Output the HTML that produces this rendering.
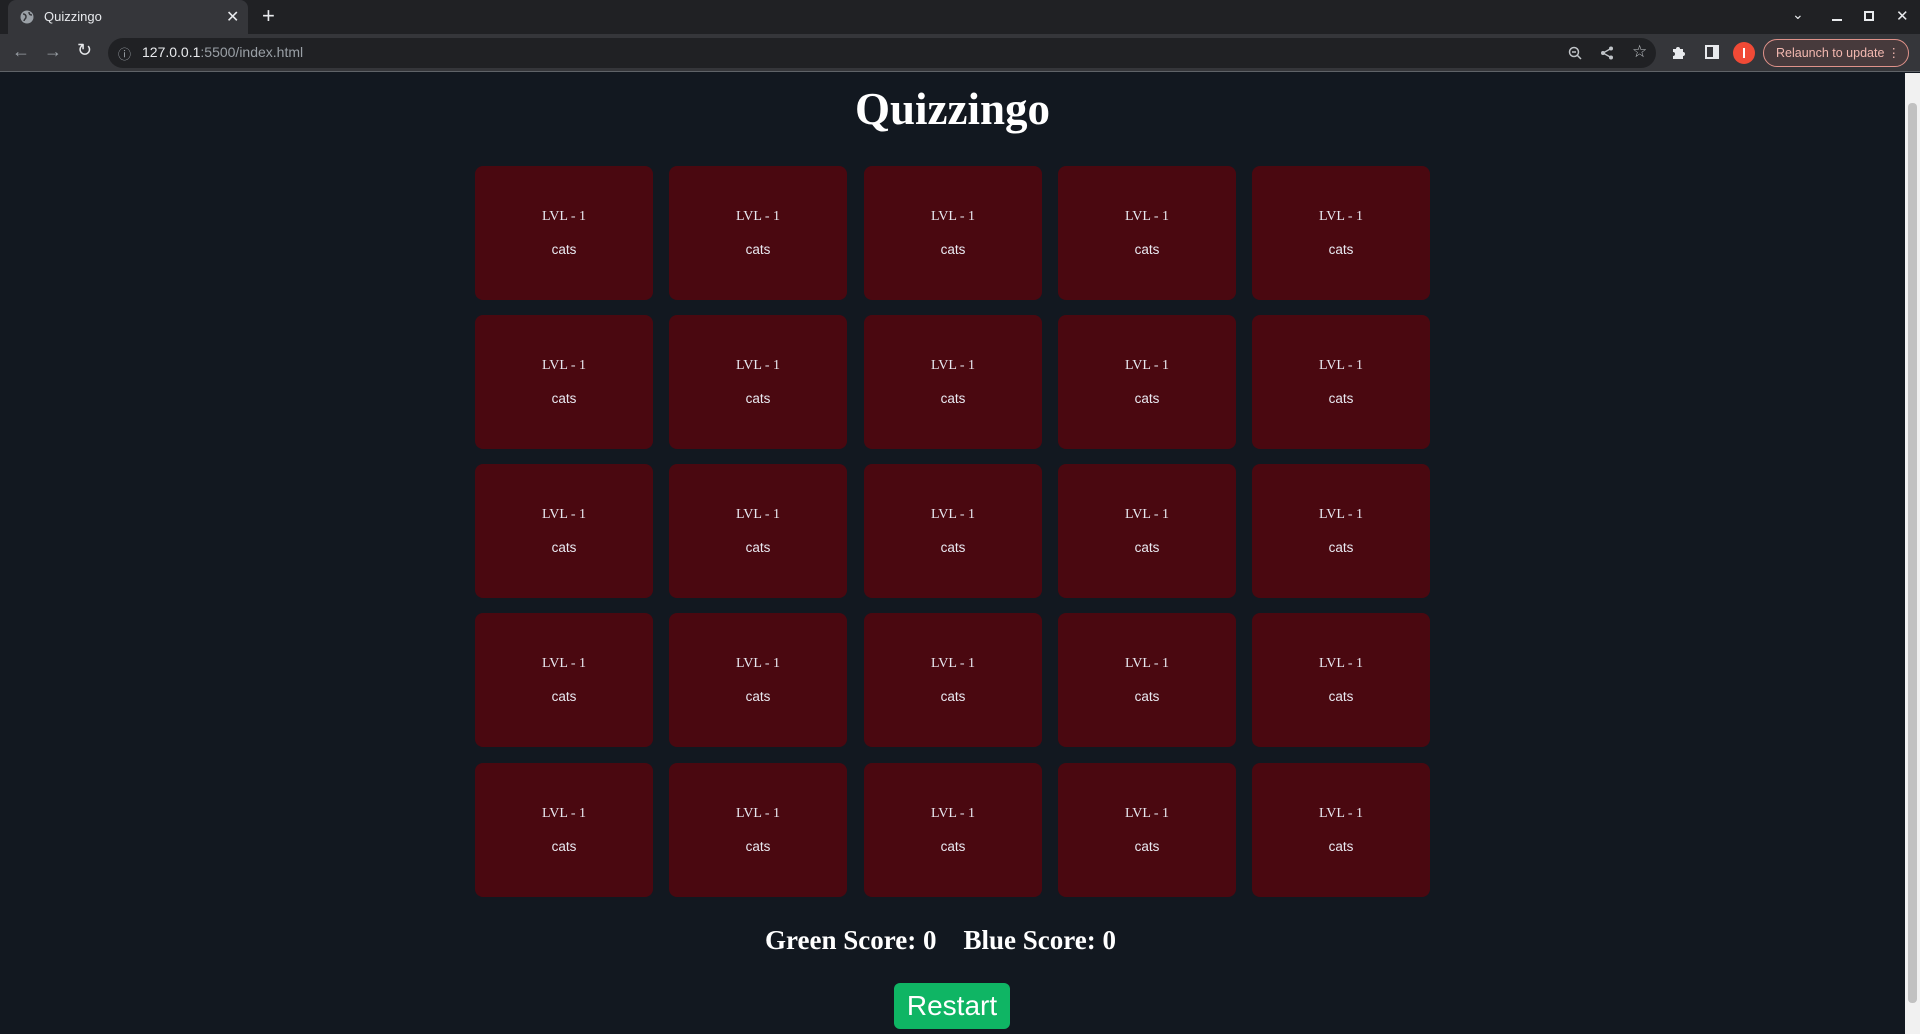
<!DOCTYPE html>
<html><head><meta charset="utf-8"><style>
*{margin:0;padding:0;box-sizing:border-box}
body{width:1920px;height:1034px;overflow:hidden;background:#121820;font-family:"Liberation Sans",sans-serif;position:relative}
.tabbar{position:absolute;left:0;top:0;width:1920px;height:34px;background:#202124}
.tab{position:absolute;left:8px;top:0;width:240px;height:34px;background:#35363a;border-radius:8px 8px 0 0;color:#e8eaed;font-size:13px}
.toolbar{position:absolute;left:0;top:34px;width:1920px;height:38px;background:#35363a;border-bottom:1px solid #5f6368}
.omni{position:absolute;left:108px;top:4px;width:1548px;height:30px;background:#202124;border-radius:15px;color:#9aa0a6;font-size:14px}
.scroll{position:absolute;right:0;top:73px;width:15px;height:961px;background:#f1f1f1}
.scroll .th{position:absolute;left:3px;top:30px;width:9px;height:900px;background:#c1c1c1;border-radius:4px}
h1{position:absolute;left:0;width:1905px;top:83px;text-align:center;font-family:"Liberation Serif",serif;font-weight:bold;font-size:45px;color:#fff}
.card{position:absolute;width:178px;height:134px;background:#4a0810;border-radius:8px;text-align:center;color:#e8e8f0}
.card .l{position:absolute;top:43px;left:0;width:100%;font-family:"Liberation Serif",serif;font-size:14px}
.card .c{position:absolute;top:76px;left:0;width:100%;font-size:13.5px}
.score{position:absolute;top:925px;left:-12px;width:1905px;text-align:center;font-family:"Liberation Serif",serif;font-weight:bold;font-size:27px;color:#fff}
.btn{position:absolute;left:894px;top:983px;width:116px;height:46px;background:#0fb564;border-radius:6px;color:#fff;font-size:28px;text-align:center;line-height:46px}
</style></head><body>
<div class="tabbar">
<div class="tab"><svg style="position:absolute;left:12px;top:10px" width="14" height="14" viewBox="0 0 14 14"><circle cx="7" cy="7" r="6.5" fill="#9aa0a6"/><path d="M3 4c2 0 3 1 3 3s-2 2-2 4M9 2c0 2 1 3 3 3" stroke="#35363a" stroke-width="1.5" fill="none"/></svg><span style="position:absolute;left:36px;top:9px">Quizzingo</span><span style="position:absolute;left:218px;top:7px;font-size:16px">✕</span></div>
<span style="position:absolute;left:262px;top:3px;color:#e8eaed;font-size:22px">+</span>
<span style="position:absolute;left:1792px;top:6px;color:#e8eaed;font-size:14px">⌄</span>
<div style="position:absolute;left:1832px;top:19px;width:10px;height:2px;background:#e8eaed"></div>
<div style="position:absolute;left:1864px;top:11px;width:10px;height:10px;border:2px solid #e8eaed"></div>
<span style="position:absolute;left:1896px;top:7px;color:#e8eaed;font-size:15px">✕</span>
</div>
<div class="toolbar">
<span style="position:absolute;left:12px;top:7px;color:#9aa0a6;font-size:18px">←</span>
<span style="position:absolute;left:44px;top:7px;color:#9aa0a6;font-size:18px">→</span>
<span style="position:absolute;left:77px;top:6px;color:#e8eaed;font-size:18px">↻</span>
<div class="omni"><span style="position:absolute;left:10px;top:6px;font-size:13px">ⓘ</span><span style="position:absolute;left:34px;top:6px"><span style="color:#e8eaed">127.0.0.1</span>:5500/index.html</span>
<svg style="position:absolute;left:1460px;top:8px" width="14" height="14" viewBox="0 0 14 14"><circle cx="6" cy="6" r="4.5" stroke="#c0c4c8" stroke-width="1.5" fill="none"/><path d="M9.5 9.5L13 13M4 6h4" stroke="#c0c4c8" stroke-width="1.5"/></svg>
<svg style="position:absolute;left:1492px;top:8px" width="14" height="14" viewBox="0 0 14 14"><circle cx="11" cy="2.5" r="2" fill="#c0c4c8"/><circle cx="3" cy="7" r="2" fill="#c0c4c8"/><circle cx="11" cy="11.5" r="2" fill="#c0c4c8"/><path d="M11 2.5L3 7l8 4.5" stroke="#c0c4c8" stroke-width="1.3" fill="none"/></svg>
<span style="position:absolute;left:1524px;top:4px;color:#c0c4c8;font-size:17px">☆</span></div>
<svg style="position:absolute;left:1671px;top:10px" width="16" height="16" viewBox="0 0 16 16"><path d="M2 5h3a2 2 0 1 1 4 0h3v3a2 2 0 1 1 0 4v3H2v-3a2 2 0 1 0 0-4z" fill="#e8eaed"/></svg>
<div style="position:absolute;left:1705px;top:11px;width:14px;height:14px;border:2px solid #e8eaed;border-right-width:6px"></div>
<div style="position:absolute;left:1733px;top:8px;width:22px;height:22px;border-radius:50%;background:#f04a36"><div style="position:absolute;left:10px;top:6px;width:2px;height:10px;background:#fff"></div></div>
<div style="position:absolute;left:1763px;top:5px;width:146px;height:28px;border:1px solid #e0928a;border-radius:14px;background:#473a3c;color:#f2b8b0;font-size:12.5px;line-height:26px;padding-left:12px">Relaunch to update <span style="position:absolute;right:8px;top:0">⋮</span></div>
</div>
<h1>Quizzingo</h1>
<div class="score">Green Score: 0&nbsp;&nbsp;&nbsp;&nbsp;Blue Score: 0</div>
<div class="btn">Restart</div>
<div class="scroll"><div class="th"></div></div>
<div style="position:absolute;left:0;top:0">
<div class="card" style="left:475px;top:166px"><div class="l">LVL - 1</div><div class="c">cats</div></div>
<div class="card" style="left:669px;top:166px"><div class="l">LVL - 1</div><div class="c">cats</div></div>
<div class="card" style="left:864px;top:166px"><div class="l">LVL - 1</div><div class="c">cats</div></div>
<div class="card" style="left:1058px;top:166px"><div class="l">LVL - 1</div><div class="c">cats</div></div>
<div class="card" style="left:1252px;top:166px"><div class="l">LVL - 1</div><div class="c">cats</div></div>
<div class="card" style="left:475px;top:315px"><div class="l">LVL - 1</div><div class="c">cats</div></div>
<div class="card" style="left:669px;top:315px"><div class="l">LVL - 1</div><div class="c">cats</div></div>
<div class="card" style="left:864px;top:315px"><div class="l">LVL - 1</div><div class="c">cats</div></div>
<div class="card" style="left:1058px;top:315px"><div class="l">LVL - 1</div><div class="c">cats</div></div>
<div class="card" style="left:1252px;top:315px"><div class="l">LVL - 1</div><div class="c">cats</div></div>
<div class="card" style="left:475px;top:464px"><div class="l">LVL - 1</div><div class="c">cats</div></div>
<div class="card" style="left:669px;top:464px"><div class="l">LVL - 1</div><div class="c">cats</div></div>
<div class="card" style="left:864px;top:464px"><div class="l">LVL - 1</div><div class="c">cats</div></div>
<div class="card" style="left:1058px;top:464px"><div class="l">LVL - 1</div><div class="c">cats</div></div>
<div class="card" style="left:1252px;top:464px"><div class="l">LVL - 1</div><div class="c">cats</div></div>
<div class="card" style="left:475px;top:613px"><div class="l">LVL - 1</div><div class="c">cats</div></div>
<div class="card" style="left:669px;top:613px"><div class="l">LVL - 1</div><div class="c">cats</div></div>
<div class="card" style="left:864px;top:613px"><div class="l">LVL - 1</div><div class="c">cats</div></div>
<div class="card" style="left:1058px;top:613px"><div class="l">LVL - 1</div><div class="c">cats</div></div>
<div class="card" style="left:1252px;top:613px"><div class="l">LVL - 1</div><div class="c">cats</div></div>
<div class="card" style="left:475px;top:763px"><div class="l">LVL - 1</div><div class="c">cats</div></div>
<div class="card" style="left:669px;top:763px"><div class="l">LVL - 1</div><div class="c">cats</div></div>
<div class="card" style="left:864px;top:763px"><div class="l">LVL - 1</div><div class="c">cats</div></div>
<div class="card" style="left:1058px;top:763px"><div class="l">LVL - 1</div><div class="c">cats</div></div>
<div class="card" style="left:1252px;top:763px"><div class="l">LVL - 1</div><div class="c">cats</div></div>
</div>
</body></html>
